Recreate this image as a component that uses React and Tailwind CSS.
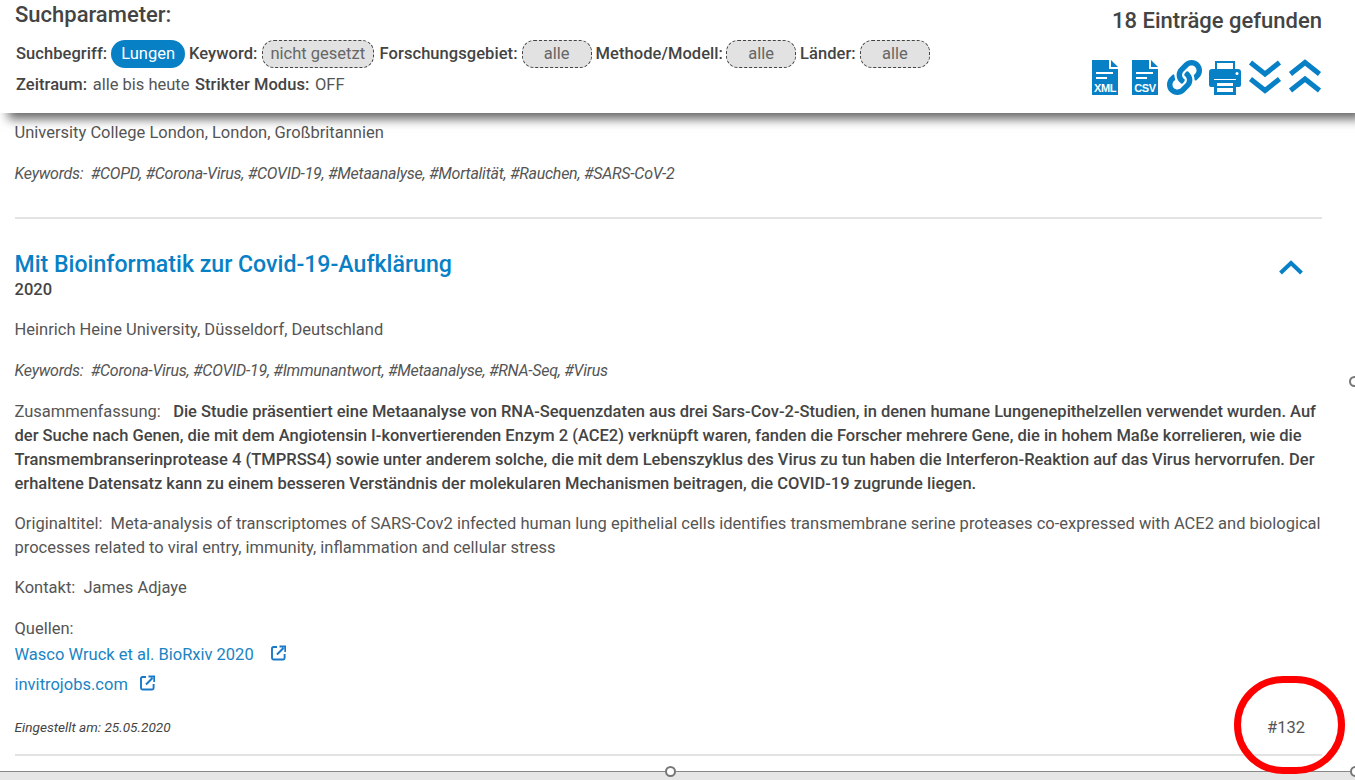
import React from "react";
import { FaLink } from "react-icons/fa";

const BLUE = "#0780c5";

function FileIcon({ label }) {
  return (
    <svg width="26" height="35" viewBox="0 0 26 35" className="block">
      <path d="M0 0H17V9H26V35H0Z" fill={BLUE} />
      <path d="M19 0L26 7H19Z" fill={BLUE} />
      <rect x="4" y="12" width="17" height="2" fill="#fff" />
      <rect x="4" y="17" width="11" height="2" fill="#fff" />
      <text x="13" y="31.5" textAnchor="middle" fontFamily="Liberation Sans, sans-serif" fontWeight="700" fontSize="11" letterSpacing="-0.4" fill="#fff">{label}</text>
    </svg>
  );
}

function Printer() {
  return (
    <svg width="32" height="34" viewBox="0 0 32 34" className="block">
      <path d="M6 0H26V8H6Z" fill={BLUE} />
      <path d="M8 2H24V8H8Z" fill="#fff" />
      <path d="M3 8H29Q32 8 32 11V24Q32 26 30 26H27V18H5V26H2Q0 26 0 24V11Q0 8 3 8Z" fill={BLUE} />
      <circle cx="28" cy="12.5" r="1.5" fill="#fff" />
      <path d="M5 19H27V34H5Z" fill={BLUE} />
      <rect x="8" y="22" width="16" height="9" fill="#fff" />
      <rect x="8" y="25" width="16" height="2" fill={BLUE} />
    </svg>
  );
}

function DoubleChevron({ up }) {
  return (
    <svg width="34" height="35" viewBox="0 0 34 35" className="block" style={up ? { transform: "scaleY(-1)" } : undefined}>
      <path d="M2.5 3.5L17 15L31.5 3.5M2.5 20L17 31.5L31.5 20" fill="none" stroke={BLUE} strokeWidth="5" />
    </svg>
  );
}

function Ext() {
  return (
    <svg width="15" height="16" viewBox="0 0 15 16" className="block">
      <path d="M6 2H2.4Q1 2 1 3.4V13Q1 14.5 2.5 14.5H12.2Q13.6 14.5 13.6 13V9" fill="none" stroke="#1a78c8" strokeWidth="1.9" />
      <path d="M6 9.5L12.5 3M8.5 1.4H14.3V7" fill="none" stroke="#1a78c8" strokeWidth="2" />
    </svg>
  );
}

function Pill({ children, on }) {
  return on ? (
    <span className="mx-1 inline-flex h-[28px] items-center rounded-[14px] bg-[#0780c5] px-[10px] text-white">{children}</span>
  ) : (
    <span className="mx-1 inline-flex h-[28px] min-w-[70px] items-center justify-center rounded-[12px] border border-dashed border-[#444] bg-[#e2e2e2] px-2 text-[#666]">{children}</span>
  );
}

function Label({ children }) {
  return <b className="font-medium tracking-[0.06px] text-[#444]">{children}</b>;
}

export default function App() {
  return (
    <div className="relative flex h-[780px] flex-col overflow-hidden bg-white text-[16.5px] text-[#555]" style={{ fontFamily: "Roboto, sans-serif" }}>
      <header className="relative z-10 flex h-[113px] shrink-0 justify-between bg-white pr-[33px] pl-[15px] shadow-[8px_6px_10px_rgba(0,0,0,0.6)]">
        <div>
          <h2 className="mt-[2px] text-[22px] leading-[26px] font-medium text-[#444]">Suchparameter:</h2>
          <div className="mt-[11px] flex h-[30px] items-center pl-px">
            <Label>Suchbegriff:</Label><Pill on>Lungen</Pill>
            <Label>Keyword:</Label><Pill>nicht gesetzt</Pill>
            <span className="ml-[1.5px]"><Label>Forschungsgebiet:</Label></span><Pill>alle</Pill>
            <span className="mr-[-1px]"><Label>Methode/Modell:</Label></span><Pill>alle</Pill>
            <Label>Länder:</Label><Pill>alle</Pill>
          </div>
          <div className="mt-[1px] flex h-[30px] items-center gap-[5.5px] pl-px">
            <Label>Zeitraum:</Label><span>alle bis heute</span>
            <Label>Strikter Modus:</Label><span>OFF</span>
          </div>
        </div>
        <div className="flex flex-col items-end">
          <div className="mt-[8px] text-[22px] leading-[26px] font-medium text-[#444]">18 Einträge gefunden</div>
          <div className="mt-[26px] flex items-center">
            <FileIcon label="XML" />
            <span className="ml-[14px]"><FileIcon label="CSV" /></span>
            <FaLink size={35} color={BLUE} className="ml-[9px]" />
            <span className="ml-[7px] mt-[1px]"><Printer /></span>
            <span className="ml-[7px] mt-[-2px]"><DoubleChevron /></span>
            <span className="ml-[6px] mt-[-2px]"><DoubleChevron up /></span>
          </div>
        </div>
      </header>

      <main className="min-h-0 flex-1 pr-[33px] pl-[14.5px] leading-[24px]">
        <p className="mt-[8px]">University College London, London, Großbritannien</p>
        <p className="mt-[17px] text-[16px] tracking-[-0.26px] italic">Keywords:&nbsp; #COPD, #Corona-Virus, #COVID-19, #Metaanalyse, #Mortalität, #Rauchen, #SARS-CoV-2</p>
        <hr className="mt-[31px] ml-[0.5px] border-t-2 border-[#e3e3e3]" />

        <div className="mt-[31px] flex justify-between">
          <div>
            <h3 className="text-[23.1px] leading-[30px] font-medium text-[#0780c5]">Mit Bioinformatik zur Covid-19-Aufklärung</h3>
            <div className="mt-[-1px] leading-[22px] font-medium text-[#444]">2020</div>
          </div>
          <svg width="26" height="16" viewBox="0 0 26 16" className="mt-[9px] mr-[18px]">
            <path d="M2.5 14L13 4L23.5 14" fill="none" stroke={BLUE} strokeWidth="4" />
          </svg>
        </div>
        <p className="mt-[17px]">Heinrich Heine University, Düsseldorf, Deutschland</p>
        <p className="mt-[17px] text-[16px] tracking-[-0.26px] italic">Keywords:&nbsp; #Corona-Virus, #COVID-19, #Immunantwort, #Metaanalyse, #RNA-Seq, #Virus</p>
        <p className="mt-[17px]">
          Zusammenfassung:&nbsp;&nbsp; <b className="font-medium text-[#444]">Die Studie präsentiert eine Metaanalyse von RNA-Sequenzdaten aus drei Sars-Cov-2-Studien, in denen humane Lungenepithelzellen verwendet wurden. Auf der Suche nach Genen, die mit dem Angiotensin I-konvertierenden Enzym 2 (ACE2) verknüpft waren, fanden die Forscher mehrere Gene, die in hohem Maße korrelieren, wie die Transmembranserinprotease 4 (TMPRSS4) sowie unter anderem solche, die mit dem Lebenszyklus des Virus zu tun haben die Interferon-Reaktion auf das Virus hervorrufen. Der erhaltene Datensatz kann zu einem besseren Verständnis der molekularen Mechanismen beitragen, die COVID-19 zugrunde liegen.</b>
        </p>
        <p className="mt-[16px]">Originaltitel:&nbsp; Meta-analysis of transcriptomes of SARS-Cov2 infected human lung epithelial cells identifies transmembrane serine proteases co-expressed with ACE2 and biological processes related to viral entry, immunity, inflammation and cellular stress</p>
        <p className="mt-[16px]">Kontakt:&nbsp; James Adjaye</p>
        <p className="mt-[18px] leading-[22px]">Quellen:</p>
        <div className="flex h-[30px] items-center gap-[17px] text-[#1a84c4]"><span>Wasco Wruck et al. BioRxiv 2020</span><span className="mt-[-4px]"><Ext /></span></div>
        <div className="flex h-[30px] items-center gap-[12px] text-[#1a84c4]"><span>invitrojobs.com</span><span className="mt-[-4px]"><Ext /></span></div>
        <div className="mt-[15px] flex items-center justify-between">
          <span className="text-[13.6px] italic text-[#444]">Eingestellt am: 25.05.2020</span>
          <span className="mt-[2px] mr-[17px] leading-[22px]">#132</span>
        </div>
        <hr className="mt-[15px] ml-[0.5px] border-t-2 border-[#e3e3e3]" />
      </main>

      <div className="h-[9px] shrink-0 border-t border-[#888] bg-[#e6e6e6]" />

      <span className="absolute top-[766px] left-[665px] z-20 size-[11px] rounded-full border-2 border-[#777] bg-white" />
      <span className="absolute top-[766px] left-[1350px] z-20 size-[11px] rounded-full border-2 border-[#777] bg-white" />
      <span className="absolute top-[376px] left-[1349px] z-20 size-[11px] rounded-full border-2 border-[#777] bg-white" />
      <span className="absolute top-[676px] left-[1234px] z-20 h-[98px] w-[111px] rounded-full border-[7px] border-[#ff0000]" />
    </div>
  );
}
